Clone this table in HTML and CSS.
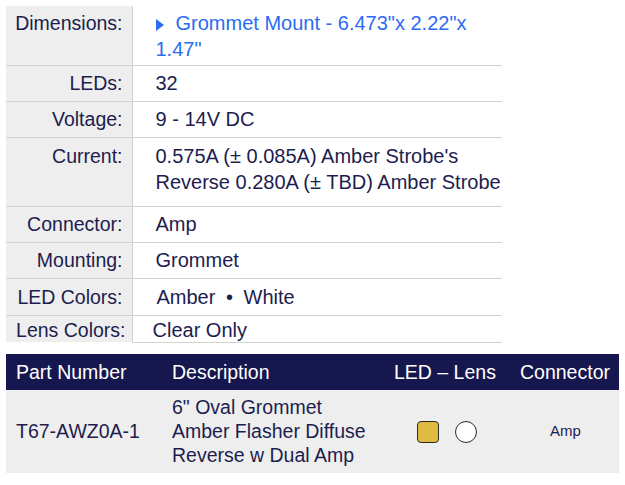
FILE: index.html
```html
<!DOCTYPE html>
<html>
<head>
<meta charset="utf-8">
<link rel="stylesheet" href="styles.css">
</head>
<body>
<div class="specs-wrap">
  <table class="specs">
    <tr class="r-dim">
      <th>Dimensions:</th>
      <td class="link"><svg class="tri" width="8" height="12" viewBox="0 0 8 12"><path d="M0 0 L8 6 L0 12 Z" fill="#2b6cf0"/></svg>Grommet Mount - 6.473"x 2.22"x 1.47"</td>
    </tr>
    <tr><th>LEDs:</th><td>32</td></tr>
    <tr><th>Voltage:</th><td>9 - 14V DC</td></tr>
    <tr class="r-cur"><th>Current:</th><td>0.575A (± 0.085A) Amber Strobe's Reverse 0.280A (± TBD) Amber Strobe</td></tr>
    <tr><th>Connector:</th><td>Amp</td></tr>
    <tr><th>Mounting:</th><td>Grommet</td></tr>
    <tr class="r-led"><th>LED Colors:</th><td><span class="ledc">Amber <span class="dot">•</span> White</span></td></tr>
    <tr class="r-lens"><th>Lens Colors:</th><td>Clear Only</td></tr>
  </table>
</div>
<div class="specs-end"></div>

<table class="parts">
  <thead>
    <tr>
      <th class="c-pn">Part Number</th>
      <th class="c-desc">Description</th>
      <th class="c-led">LED – Lens</th>
      <th class="c-conn">Connector</th>
    </tr>
  </thead>
  <tbody>
    <tr>
      <td class="c-pn">T67-AWZ0A-1</td>
      <td class="c-desc">6" Oval Grommet<br>Amber Flasher Diffuse<br>Reverse w Dual Amp</td>
      <td class="c-led"><span class="swatches"><span class="sw-amber"></span><span class="sw-clear"></span></span></td>
      <td class="c-conn small">Amp</td>
    </tr>
  </tbody>
</table>
</body>
</html>
```

FILE: styles.css
```css
html, body {
  margin: 0;
  padding: 0;
  background: #ffffff;
}
body {
  padding: 6px;
  font-family: "Liberation Sans", Arial, sans-serif;
  color: #1d1d4f;
}
.specs-wrap {
  width: 496px;
  height: 336px;
  overflow: hidden;
}
.specs {
  border-collapse: collapse;
  width: 496px;
  font-size: 20px;
  line-height: 26px;
}
.specs th {
  width: 126px;
  background: #eeeeee;
  font-weight: normal;
  font-size: 19.5px;
  text-align: right;
  vertical-align: top;
  padding: 4px 9px 5px 0;
  border-right: 1px solid #d2d2d2;
  border-bottom: 1px solid #d2d2d2;
  box-sizing: border-box;
  white-space: nowrap;
}
.specs td {
  vertical-align: top;
  padding: 4px 0 5px 23px;
  border-bottom: 1px solid #d2d2d2;
}
.specs tr.r-dim th, .specs tr.r-dim td {
  padding-top: 4px;
  padding-bottom: 3px;
}
.specs tr.r-cur th, .specs tr.r-cur td {
  padding-top: 5px;
  padding-bottom: 11px;
}
.specs tr.r-led th, .specs tr.r-led td {
  padding-top: 5px;
  padding-bottom: 5px;
}
.specs tr.r-lens th {
  padding-top: 1px;
  padding-right: 6px;
}
.specs tr.r-lens td {
  padding-top: 1px;
  padding-left: 20px;
}
.link {
  color: #2b6cf0;
}
.tri {
  display: inline-block;
  margin-right: 12px;
  vertical-align: -1px;
}
.ledc {
  margin-left: 1px;
}
.dot {
  margin: 0 5px;
}
.specs-end {
  margin-left: 126px;
  width: 370px;
  border-top: 1px solid #d2d2d2;
}

.parts {
  margin-top: 11px;
  border-collapse: collapse;
  width: 613px;
  font-size: 19.5px;
  table-layout: fixed;
}
.parts th {
  background: #17174f;
  color: #ffffff;
  font-weight: normal;
  text-align: left;
  height: 36px;
  padding: 0 0 0 10px;
  line-height: 22px;
  box-sizing: border-box;
  white-space: nowrap;
}
.parts td {
  background: #eeeeee;
  padding: 5px 0 6px 10px;
  line-height: 24px;
  vertical-align: middle;
}
.parts .c-pn { width: 156px; }
.parts .c-desc { width: 222px; }
.parts .c-led { width: 126px; }
.parts .c-conn { width: 109px; }
.parts td.c-led {
  text-align: center;
  padding-left: 0;
}
.parts td.c-conn {
  text-align: center;
  padding-left: 2px;
  padding-right: 0;
}
.small {
  font-size: 15px;
}
.swatches {
  display: inline-flex;
  gap: 16px;
  align-items: center;
  vertical-align: middle;
}
.sw-amber {
  width: 22px;
  height: 22px;
  box-sizing: border-box;
  background: #e0bb42;
  border: 1.5px solid #2a2a2a;
  border-radius: 4px;
}
.sw-clear {
  width: 22px;
  height: 22px;
  box-sizing: border-box;
  background: #ffffff;
  border: 1.5px solid #2a2a2a;
  border-radius: 50%;
}
```
